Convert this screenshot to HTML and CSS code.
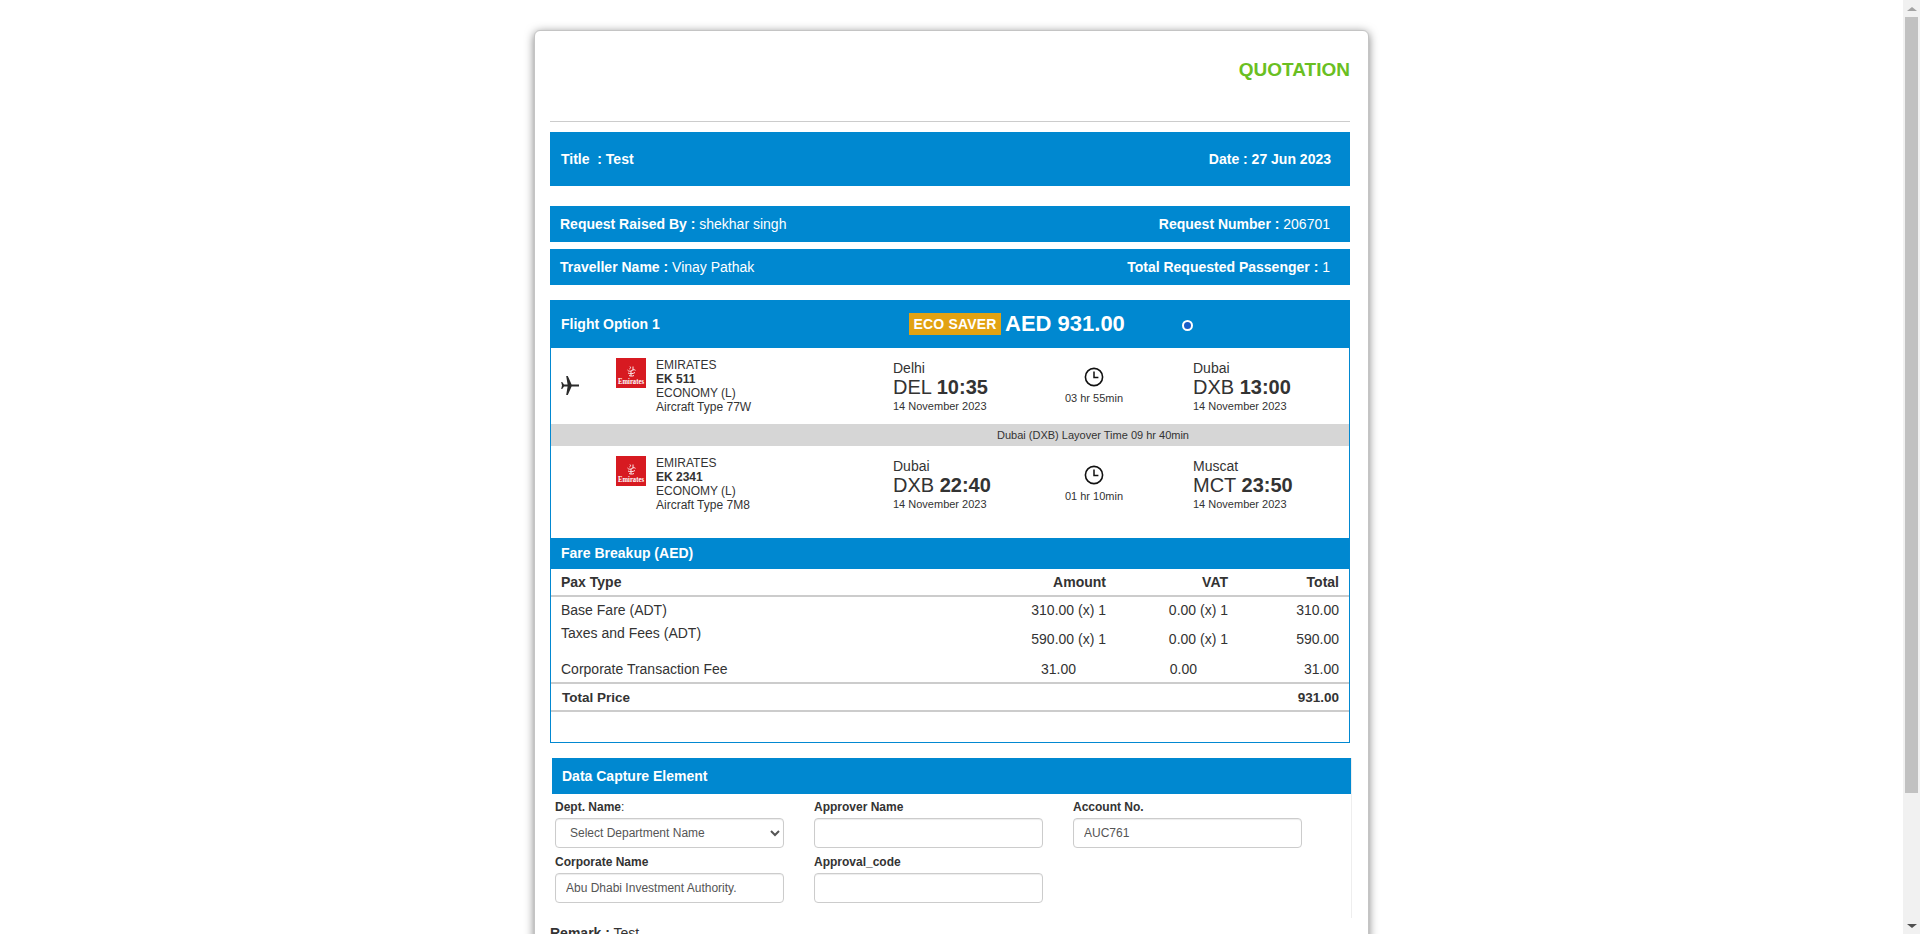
FILE: index.html
```html
<!DOCTYPE html>
<html lang="en">
<head>
    <meta charset="UTF-8">
    <meta name="viewport" content="width=device-width, initial-scale=1.0">
    <title>Quotation</title>
    <link rel="stylesheet" href="styles.css">
</head>
<body>

<div class="viewport">
    <main class="page">
        <div class="card">
            <div class="quote-head">QUOTATION</div>
            <hr class="rule">

            <div class="bar bar-title">
                <b>Title &nbsp;: Test</b>
                <b>Date : 27 Jun 2023</b>
            </div>
            <div class="bar bar-info">
                <span><b>Request Raised By :</b> shekhar singh</span>
                <span><b>Request Number :</b> 206701</span>
            </div>
            <div class="bar bar-info">
                <span><b>Traveller Name :</b> Vinay Pathak</span>
                <span><b>Total Requested Passenger :</b> 1</span>
            </div>

            <section class="option">
                <div class="option-head">
                    <b class="option-name">Flight Option 1</b>
                    <span class="fare-tag">ECO SAVER</span>
                    <b class="fare-price">AED 931.00</b>
                    <input class="fare-pick" type="radio" checked>
                </div>

                <div class="option-body">
                    <div class="segment">
                        <div class="seg-plane">
                            <svg viewBox="0 0 20 20" width="20" height="20"><path d="M18 8.4H10.6L6.8 0H5.2L6.6 8.4H3L1.2 6H.2L1 9.5L.2 13H1.2L3 10.6H6.6L5.2 19H6.8L10.6 10.6H18Z"/></svg>
                        </div>
                        <svg class="seg-logo" viewBox="0 0 30 30">
                            <rect width="30" height="30" fill="#d71a21"/>
                            <path class="logo-mark" d="M14 8.5c1 1 .5 2-.5 2.5M17 8.5v3.5M11.5 12c1 1.5 3 1.5 4.5.5s2.5-1 3.5-.2M12 15c1.5 1 5 1 7-.5M15 13v5M13 17.5c1.5.8 3.5.8 5 0"/>
                            <text x="15" y="25.5" textLength="26" lengthAdjust="spacingAndGlyphs" class="logo-word">Emirates</text>
                        </svg>
                        <div class="seg-carrier">
                            <div>EMIRATES</div>
                            <b>EK 511</b>
                            <div>ECONOMY (L)</div>
                            <div>Aircraft Type 77W</div>
                        </div>
                        <div class="seg-point">
                            <div class="city">Delhi</div>
                            <div class="when">DEL <b>10:35</b></div>
                            <div class="day">14 November 2023</div>
                        </div>
                        <div class="seg-time">
                            <svg viewBox="0 0 20 20" width="20" height="20"><circle cx="10" cy="10" r="8.6" fill="none" stroke="#111" stroke-width="1.6"/><path d="M10 4.6V10.6H14.4" fill="none" stroke="#111" stroke-width="1.5"/></svg>
                            <div>03 hr 55min</div>
                        </div>
                        <div class="seg-point">
                            <div class="city">Dubai</div>
                            <div class="when">DXB <b>13:00</b></div>
                            <div class="day">14 November 2023</div>
                        </div>
                    </div>

                    <div class="layover">Dubai (DXB) Layover Time 09 hr 40min</div>

                    <div class="segment">
                        <div class="seg-plane"></div>
                        <svg class="seg-logo" viewBox="0 0 30 30">
                            <rect width="30" height="30" fill="#d71a21"/>
                            <path class="logo-mark" d="M14 8.5c1 1 .5 2-.5 2.5M17 8.5v3.5M11.5 12c1 1.5 3 1.5 4.5.5s2.5-1 3.5-.2M12 15c1.5 1 5 1 7-.5M15 13v5M13 17.5c1.5.8 3.5.8 5 0"/>
                            <text x="15" y="25.5" textLength="26" lengthAdjust="spacingAndGlyphs" class="logo-word">Emirates</text>
                        </svg>
                        <div class="seg-carrier">
                            <div>EMIRATES</div>
                            <b>EK 2341</b>
                            <div>ECONOMY (L)</div>
                            <div>Aircraft Type 7M8</div>
                        </div>
                        <div class="seg-point">
                            <div class="city">Dubai</div>
                            <div class="when">DXB <b>22:40</b></div>
                            <div class="day">14 November 2023</div>
                        </div>
                        <div class="seg-time">
                            <svg viewBox="0 0 20 20" width="20" height="20"><circle cx="10" cy="10" r="8.6" fill="none" stroke="#111" stroke-width="1.6"/><path d="M10 4.6V10.6H14.4" fill="none" stroke="#111" stroke-width="1.5"/></svg>
                            <div>01 hr 10min</div>
                        </div>
                        <div class="seg-point">
                            <div class="city">Muscat</div>
                            <div class="when">MCT <b>23:50</b></div>
                            <div class="day">14 November 2023</div>
                        </div>
                    </div>

                    <div class="fare-title">Fare Breakup (AED)</div>

                    <div class="fare-row fare-labels">
                        <span>Pax Type</span><span>Amount</span><span>VAT</span><span>Total</span>
                    </div>
                    <div class="fare-row fare-base">
                        <span>Base Fare (ADT)</span><span>310.00 (x) 1</span><span>0.00 (x) 1</span><span>310.00</span>
                    </div>
                    <div class="fare-row fare-taxes">
                        <span class="fare-top">Taxes and Fees (ADT)</span><span>590.00 (x) 1</span><span>0.00 (x) 1</span><span>590.00</span>
                    </div>
                    <div class="fare-row fare-corp">
                        <span>Corporate Transaction Fee</span><span>31.00</span><span>0.00</span><span>31.00</span>
                    </div>
                    <div class="fare-row fare-sum">
                        <span>Total Price</span><span></span><span></span><span>931.00</span>
                    </div>
                    <div class="fare-foot"></div>
                </div>
            </section>

            <section class="capture">
                <div class="capture-head">Data Capture Element</div>
                <div class="capture-grid">
                    <div class="field">
                        <label>Dept. Name<span class="colon">:</span></label>
                        <select class="control control-select"><option>Select Department Name</option></select>
                    </div>
                    <div class="field">
                        <label>Approver Name</label>
                        <input class="control" type="text">
                    </div>
                    <div class="field">
                        <label>Account No.</label>
                        <input class="control" type="text" value="AUC761">
                    </div>
                    <div class="field">
                        <label>Corporate Name</label>
                        <input class="control" type="text" value="Abu Dhabi Investment Authority.">
                    </div>
                    <div class="field">
                        <label>Approval_code</label>
                        <input class="control" type="text">
                    </div>
                </div>
            </section>

            <div class="remark"><b>Remark :</b> Test</div>
        </div>
    </main>

    <div class="scrollbar">
        <div class="scroll-btn"><i class="arrow-up"></i></div>
        <div class="scroll-thumb"></div>
        <div class="scroll-btn scroll-btn-end"><i class="arrow-down"></i></div>
    </div>
</div>

</body>
</html>
```

FILE: styles.css
```css
html, body {
    margin: 0;
    height: 100%;
    overflow: hidden;
}
body {
    font-family: "Liberation Sans", Arial, sans-serif;
    font-size: 14px;
    color: #333;
    background-color: #fff;
}
b {
    font-weight: bold;
}

.viewport {
    display: flex;
    height: 934px;
}
.page {
    flex: 1;
    min-width: 0;
    overflow: hidden;
    padding-top: 30px;
}

/* fake browser scrollbar */
.scrollbar {
    width: 17px;
    display: flex;
    flex-direction: column;
    background-color: #f1f1f1;
}
.scroll-btn {
    height: 17px;
    display: flex;
    align-items: center;
    justify-content: center;
}
.scroll-btn-end {
    margin-top: auto;
}
.scroll-thumb {
    height: 776px;
    margin: 0 2px;
    background-color: #c1c1c1;
}
.arrow-up, .arrow-down {
    width: 0;
    height: 0;
    border-left: 5px solid transparent;
    border-right: 5px solid transparent;
}
.arrow-up {
    border-bottom: 4px solid #a3a3a3;
}
.arrow-down {
    border-top: 4px solid #505050;
}

.card {
    width: 835px;
    height: 1060px;
    margin: 0 auto;
    box-sizing: border-box;
    padding: 0 18px 0 15px;
    background-color: #fff;
    border: 1px solid #c4c4c4;
    border-radius: 6px;
    box-shadow: 0 2px 10px rgba(0, 0, 0, 0.5);
}

.quote-head {
    height: 42px;
    padding: 18px 0 30px;
    line-height: 42px;
    text-align: right;
    font-size: 19px;
    font-weight: bold;
    color: #6abf22;
}
.rule {
    margin: 0 0 10px;
    border: 0;
    border-top: 1px solid #ccc;
}

.bar {
    display: flex;
    justify-content: space-between;
    align-items: center;
    background-color: #0088d0;
    color: #fff;
}
.bar-title {
    height: 54px;
    padding: 0 19px 0 11px;
    margin-bottom: 20px;
}
.bar-info {
    height: 36px;
    padding: 0 20px 0 10px;
    margin-bottom: 7px;
}

.option {
    margin-top: 15px;
}
.option-head {
    display: flex;
    align-items: center;
    height: 48px;
    padding-left: 11px;
    background-color: #0088d0;
    color: #fff;
}
.option-name {
    width: 348px;
}
.fare-tag {
    height: 22px;
    line-height: 22px;
    width: 92px;
    text-align: center;
    background-color: #e2a212;
    font-weight: bold;
    letter-spacing: 0.2px;
}
.fare-price {
    margin-left: 4px;
    font-size: 22px;
}
.fare-pick {
    appearance: none;
    width: 11px;
    height: 11px;
    margin: 3px 0 0 57px;
    box-sizing: border-box;
    border: 2px solid #fff;
    border-radius: 50%;
    background-color: #1a5cc8;
}

.option-body {
    border: 1px solid #0288d1;
    border-top: 0;
}

.segment {
    display: grid;
    grid-template-columns: 65px 30px 247px 148px 152px auto;
    height: 76px;
}
.segment + .layover + .segment {
    height: 92px;
}
.seg-plane {
    padding: 28px 0 0 10px;
}
.seg-plane svg {
    display: block;
    fill: #2b2b2b;
}
.seg-logo {
    display: block;
    width: 30px;
    height: 30px;
    margin-top: 10px;
}
.logo-mark {
    fill: none;
    stroke: #fff;
    stroke-width: 0.9;
}
.logo-word {
    font-family: "Liberation Serif", serif;
    font-size: 7.5px;
    font-weight: bold;
    fill: #fff;
    text-anchor: middle;
}
.seg-carrier {
    padding: 10px 0 0 10px;
    font-size: 12px;
    line-height: 14px;
}
.seg-carrier b {
    display: block;
}
.seg-point {
    padding-top: 12px;
}
.city {
    font-size: 14px;
    line-height: 16px;
}
.when {
    font-size: 20px;
    line-height: 22px;
}
.day {
    font-size: 11px;
    line-height: 14px;
    margin-top: 1px;
}
.seg-time {
    padding-top: 19px;
    margin-right: 46px;
    font-size: 11px;
    text-align: center;
}
.seg-time svg {
    display: block;
    margin: 0 auto 4px;
}
.seg-time div {
    line-height: 14px;
}

.layover {
    height: 22px;
    line-height: 22px;
    padding-left: 446px;
    font-size: 11px;
    background-color: #d6d6d6;
}

.fare-title {
    height: 31px;
    line-height: 31px;
    padding-left: 10px;
    font-weight: bold;
    color: #fff;
    background-color: #0088d0;
}

.fare-row {
    display: grid;
    grid-template-columns: 389px 156px 122px 111px;
    padding: 0 9px 0 10px;
    align-items: center;
}
.fare-row span:not(:first-child) {
    text-align: right;
}
.fare-labels {
    height: 26px;
    font-weight: bold;
    border-bottom: 2px solid #ccc;
}
.fare-base {
    height: 25px;
}
.fare-taxes {
    height: 33px;
}
.fare-top {
    align-self: start;
    padding-top: 3px;
}
.fare-corp {
    height: 27px;
}
.fare-corp span:nth-child(2) {
    padding-right: 30px;
}
.fare-corp span:nth-child(3) {
    padding-right: 31px;
}
.fare-sum {
    grid-template-columns: 389px 156px 122px 110px;
    height: 26px;
    padding-left: 11px;
    font-weight: bold;
    font-size: 13.5px;
    border-top: 2px solid #ccc;
    border-bottom: 2px solid #ccc;
}
.fare-foot {
    height: 30px;
}

.capture {
    margin: 15px -2px 0 2px;
    border-right: 1px solid #eee;
}
.capture-head {
    height: 36px;
    line-height: 36px;
    padding-left: 10px;
    font-weight: bold;
    color: #fff;
    background-color: #0088d0;
}
.capture-grid {
    display: grid;
    grid-template-columns: repeat(3, 229px);
    column-gap: 30px;
    padding: 5px 0 9px 3px;
}
.field label {
    display: block;
    height: 16px;
    line-height: 16px;
    margin-bottom: 3px;
    font-size: 12px;
    font-weight: bold;
}
.colon {
    font-weight: normal;
}
.control {
    display: block;
    width: 100%;
    height: 30px;
    box-sizing: border-box;
    margin-bottom: 6px;
    padding: 0 10px;
    font-family: "Liberation Sans", Arial, sans-serif;
    font-size: 12px;
    color: #555;
    background-color: #fff;
    border: 1px solid #ccc;
    border-radius: 4px;
    box-shadow: inset 0 1px 1px rgba(0, 0, 0, 0.075);
}

.remark {
    margin-top: 7px;
    line-height: 16px;
}
```
